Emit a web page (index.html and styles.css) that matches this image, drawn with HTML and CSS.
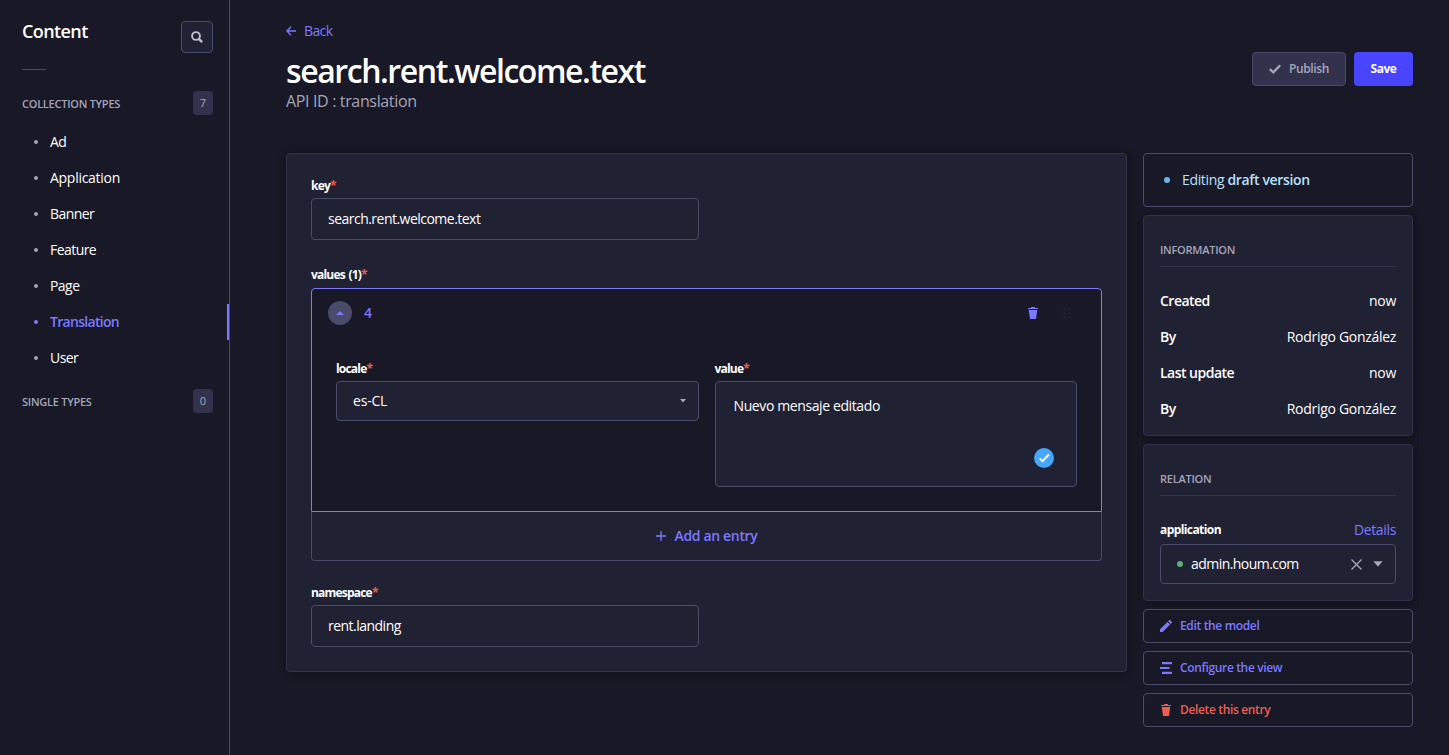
FILE: index.html
```html
<!DOCTYPE html>
<html lang="en">
<head>
<meta charset="utf-8">
<title>Content Manager</title>
<link rel="stylesheet" href="styles.css">
</head>
<body>
<div class="app">
  <nav class="sidebar">
    <div class="sidebar-head">
      <h2 class="sidebar-title">Content</h2>
      <button class="search-btn" aria-label="Search">
        <svg width="12" height="12" viewBox="0 0 12 12" fill="none" stroke="currentColor"><circle cx="5" cy="5" r="3.9" stroke-width="1.9"/><path d="M7.8 7.8l3.3 3.3" stroke-width="2.4"/></svg>
      </button>
    </div>
    <div class="sidebar-rule"></div>
    <div class="section-head"><span class="sigma">COLLECTION TYPES</span><span class="badge">7</span></div>
    <ul class="links">
      <li>Ad</li>
      <li class="wide">Application</li>
      <li>Banner</li>
      <li>Feature</li>
      <li>Page</li>
      <li class="active">Translation</li>
      <li>User</li>
    </ul>
    <div class="section-head"><span class="sigma">SINGLE TYPES</span><span class="badge">0</span></div>
  </nav>

  <main class="main">
    <header class="header">
      <div class="heading">
        <a class="back"><svg width="10" height="10" viewBox="0 0 10 10" fill="none" stroke="currentColor" stroke-width="1.3"><path d="M10 5H1M5 .7L.9 5 5 9.3"/></svg><span>Back</span></a>
        <h1>search.rent.welcome.text</h1>
        <p class="subtitle">API ID : translation</p>
      </div>
      <div class="actions">
        <button class="btn btn-disabled"><svg width="12" height="10" viewBox="0 0 12 10" fill="none" stroke="currentColor" stroke-width="2.3"><path d="M.8 5.1l3.5 3.2L11.2 1.2"/></svg><span>Publish</span></button>
        <button class="btn btn-primary">Save</button>
      </div>
    </header>

    <div class="columns">
      <section class="card form">
        <div class="field half">
          <label>key<i>*</i></label>
          <div class="input">search.rent.welcome.text</div>
        </div>
        <div class="field values">
          <label>values (1)<i>*</i></label>
          <div class="repeater">
            <div class="entry">
              <div class="entry-head">
                <span class="toggle"><svg width="8" height="4" viewBox="0 0 8 4" fill="currentColor"><path d="M4 0l4 4H0z"/></svg></span>
                <span class="entry-name">4</span>
                <svg class="entry-trash" width="10" height="12" viewBox="0 0 10 12" fill="currentColor"><path d="M3 0h4v1h3v1H0V1h3zM.7 3h8.6L8 12H2z"/></svg>
                <svg class="grip" width="8" height="12" viewBox="0 0 8 12" fill="currentColor"><circle cx="1.7" cy="1.7" r="1.5"/><circle cx="6.3" cy="1.7" r="1.5"/><circle cx="1.7" cy="6" r="1.5"/><circle cx="6.3" cy="6" r="1.5"/><circle cx="1.7" cy="10.3" r="1.5"/><circle cx="6.3" cy="10.3" r="1.5"/></svg>
              </div>
              <div class="entry-body">
                <div class="field">
                  <label>locale<i>*</i></label>
                  <div class="select"><span>es-CL</span><svg width="6" height="4" viewBox="0 0 6 4" fill="currentColor"><path d="M0 0h6L3 3.6z"/></svg></div>
                </div>
                <div class="field">
                  <label>value<i>*</i></label>
                  <div class="textarea">Nuevo mensaje editado
                    <svg class="checked" width="20" height="20" viewBox="0 0 20 20" fill="none"><circle cx="10" cy="10" r="10" fill="#45a6fb"/><path d="M5.6 10.4l2.9 2.8 6.4-6.7" stroke="#fff" stroke-width="2"/></svg>
                  </div>
                </div>
              </div>
            </div>
            <button class="add"><svg width="10" height="10" viewBox="0 0 10 10" stroke="currentColor" stroke-width="1.3"><path d="M5 0v10M0 5h10"/></svg><span>Add an entry</span></button>
          </div>
        </div>
        <div class="field half">
          <label>namespace<i>*</i></label>
          <div class="input">rent.landing</div>
        </div>
      </section>

      <aside class="side">
        <div class="status"><span>Editing <b>draft version</b></span></div>
        <section class="card panel info">
          <h3 class="sigma">INFORMATION</h3>
          <dl>
            <div><dt>Created</dt><dd>now</dd></div>
            <div><dt>By</dt><dd>Rodrigo González</dd></div>
            <div><dt>Last update</dt><dd>now</dd></div>
            <div><dt>By</dt><dd>Rodrigo González</dd></div>
          </dl>
        </section>
        <section class="card panel relation">
          <h3 class="sigma">RELATION</h3>
          <div class="relation-head"><label>application</label><a>Details</a></div>
          <div class="combo"><span>admin.houm.com</span>
            <svg width="11" height="11" viewBox="0 0 11 11" stroke="currentColor" stroke-width="1.4"><path d="M.5.5l10 10M10.5.5l-10 10"/></svg>
            <svg width="10" height="6" viewBox="0 0 10 6" fill="currentColor"><path d="M.3.2h9.4L5 5.8z"/></svg>
          </div>
        </section>
        <button class="tool"><svg width="12" height="12" viewBox="0 0 12 12" fill="currentColor"><path d="M0 9.3L7.4 1.9l2.7 2.7L2.7 12H0zM8.1 1.2L9.3.1c.2-.2.6-.2.8 0l1.8 1.8c.2.2.2.6 0 .8l-1.1 1.2z"/></svg><span>Edit the model</span></button>
        <button class="tool"><svg width="12" height="12" viewBox="0 0 12 12" fill="currentColor"><path d="M2 0h10v2.3H2zM0 4.9h9.5v2.2H0zM2 9.7h10V12H2z"/></svg><span>Configure the view</span></button>
        <button class="tool danger"><svg width="12" height="12" viewBox="0 0 12 12" fill="currentColor"><path d="M4 0h4v1h3v1H1V1h3zM1.7 3h8.6L9 12H3z"/></svg><span>Delete this entry</span></button>
      </aside>
    </div>
  </main>
</div>
</body>
</html>
```
FILE: styles.css
```css
* { box-sizing: border-box; }
body { margin: 0; background: #181826; color: #fff; font: 14px/20px "Open Sans", "Noto Sans", sans-serif; letter-spacing: -.35px; }
h1, h2, h3, p, ul, dl, dd { margin: 0; padding: 0; }
button { font: inherit; color: inherit; letter-spacing: inherit; background: none; border: 0; padding: 0; }
svg { display: block; flex: none; }
.app { display: flex; height: 755px; overflow: hidden; }

.sidebar { width: 230px; flex: none; border-right: 1px solid #4a4a6a; padding-top: 21px; }
.sidebar-head { display: flex; justify-content: space-between; padding: 0 16px 0 22px; height: 32px; }
.sidebar-title { font-size: 18px; line-height: 21px; font-weight: 600; letter-spacing: -.6px; }
.search-btn { width: 32px; height: 32px; display: grid; place-items: center; border: 1px solid #4a4a6a; border-radius: 4px; background: #212134; color: #c0c0cf; }
.sidebar-rule { width: 24px; height: 1px; margin: 16px 0 21px 22px; background: #4a4a6a; }
.section-head { display: flex; align-items: center; justify-content: space-between; height: 24px; padding: 0 16px 0 22px; }
.section-head .sigma { padding-top: 2px; }
.sigma { font-size: 11px; line-height: 16px; font-weight: 600; color: #a5a5ba; letter-spacing: -.25px; }
.badge { width: 20px; height: 24px; border-radius: 4px; background: #32324d; color: #a5a5ba; font-size: 11px; line-height: 24px; text-align: center; letter-spacing: 0; }
.links { list-style: none; padding: 9px 0 13px; letter-spacing: -.55px; }
.links li { display: flex; align-items: center; gap: 12px; height: 36px; padding-left: 34px; }
.links li::before { content: ""; width: 4px; height: 4px; border-radius: 50%; background: #a5a5ba; }
.links .wide { letter-spacing: -.28px; }
.links .active { color: #7b79ff; font-weight: 600; border-right: 2px solid #7b79ff; letter-spacing: -.7px; }
.links .active::before { background: #7b79ff; }

.main { flex: 1; padding: 21px 36px 0 56px; }
.header { display: flex; justify-content: space-between; height: 132px; }
.back { display: flex; align-items: center; gap: 8px; height: 20px; color: #7b79ff; letter-spacing: -.6px; }
h1 { font-size: 32px; line-height: 40px; font-weight: 600; margin-top: 10px; letter-spacing: -1.43px; }
.subtitle { font-size: 16px; line-height: 20px; color: #a5a5ba; }
.actions { display: flex; gap: 8px; padding-top: 31px; }
.btn { display: flex; align-items: center; justify-content: center; gap: 8px; height: 34px; border-radius: 4px; font-size: 12px; font-weight: 600; }
.btn-disabled { width: 94px; border: 1px solid #4a4a6a; background: #32324d; color: #a5a5ba; }
.btn-primary { width: 59px; background: #4945ff; font-weight: 700; letter-spacing: -.5px; }

.columns { display: grid; grid-template-columns: 841px 270px; gap: 16px; align-items: start; }
.card { background: #212134; border: 1px solid #32324d; border-radius: 4px; box-shadow: 1px 1px 10px rgba(3, 3, 5, .35); }
.form { height: 519px; padding: 24px; }
.half { width: 387.5px; }
label { display: flex; height: 16px; font-size: 12px; line-height: 16px; font-weight: 700; margin-bottom: 4px; letter-spacing: -.8px; word-spacing: 1.2px; }
label i { font-style: normal; color: #ee5e52; }
.input { height: 42px; border: 1px solid #4a4a6a; border-radius: 4px; padding: 0 16px; line-height: 40px; letter-spacing: -.52px; }
.values { margin: 27px 0 24px; }
.values > label { margin-bottom: 5px; }
.repeater { height: 273px; }
.entry { height: 224px; border: 1px solid #7b79ff; border-radius: 4px 4px 0 0; background: #181826; }
.entry-head { display: flex; align-items: center; height: 48px; padding: 0 30px 0 16px; color: #7b79ff; }
.toggle { width: 24px; height: 24px; border-radius: 50%; background: #4a4a6a; display: grid; place-items: center; }
.entry-name { margin-left: 12px; font-weight: 600; }
.entry-trash { margin-left: auto; }
.grip { margin-left: 25px; color: #212134; }
.entry-body { display: grid; grid-template-columns: 1fr 1fr; gap: 16px; padding: 24px; }
.select { display: flex; align-items: center; justify-content: space-between; height: 40px; padding: 0 12px 0 16px; border: 1px solid #4a4a6a; border-radius: 4px; background: #212134; letter-spacing: -.2px; }
.select svg, .combo svg { color: #a5a5ba; }
.textarea { position: relative; height: 106px; padding: 14px 18px; border: 1px solid #4a4a6a; border-radius: 4px; background: #212134; letter-spacing: -.39px; }
.checked { position: absolute; right: 22px; bottom: 18px; }
.add { display: flex; align-items: center; justify-content: center; gap: 9px; width: 100%; height: 49px; border: 1px solid #4a4a6a; border-top: 0; border-radius: 0 0 4px 4px; color: #7b79ff; font-weight: 600; }

.side { display: grid; gap: 8px; }
.status { display: flex; align-items: center; gap: 12px; height: 54px; padding-left: 20px; border: 1px solid #4a4a6a; border-radius: 4px; color: #b8e1ff; }
.status::before { content: ""; width: 6px; height: 6px; border-radius: 50%; background: #66b7f1; }
.status b { font-weight: 600; }
.panel { padding: 26px 16px 0; }
.info { height: 221px; }
.relation { height: 157px; }
.panel h3 { height: 25px; border-bottom: 1px solid #32324d; }
.info dl { padding-top: 16px; }
.info dl div { display: flex; align-items: center; justify-content: space-between; height: 36px; }
dt { font-weight: 600; letter-spacing: -.52px; }
dd { letter-spacing: -.3px; }
.relation-head { display: flex; align-items: center; justify-content: space-between; height: 20px; margin: 24px 0 4px; }
.relation-head label { margin: 0; letter-spacing: -.58px; }
.relation-head a { color: #7b79ff; }
.combo { display: flex; align-items: center; height: 40px; padding: 0 12px 0 16px; gap: 8px; border: 1px solid #4a4a6a; border-radius: 4px; letter-spacing: -.55px; }
.combo::before { content: ""; width: 6px; height: 6px; border-radius: 50%; background: #5cb176; }
.combo span { flex: 1; }
.combo svg + svg { margin-left: 3px; }
.tool { display: flex; align-items: center; gap: 8px; height: 34px; padding-left: 16px; border: 1px solid #4a4a6a; border-radius: 4px; color: #7b79ff; font-size: 12px; font-weight: 600; }
.tool.danger { color: #ee5e52; }
```
